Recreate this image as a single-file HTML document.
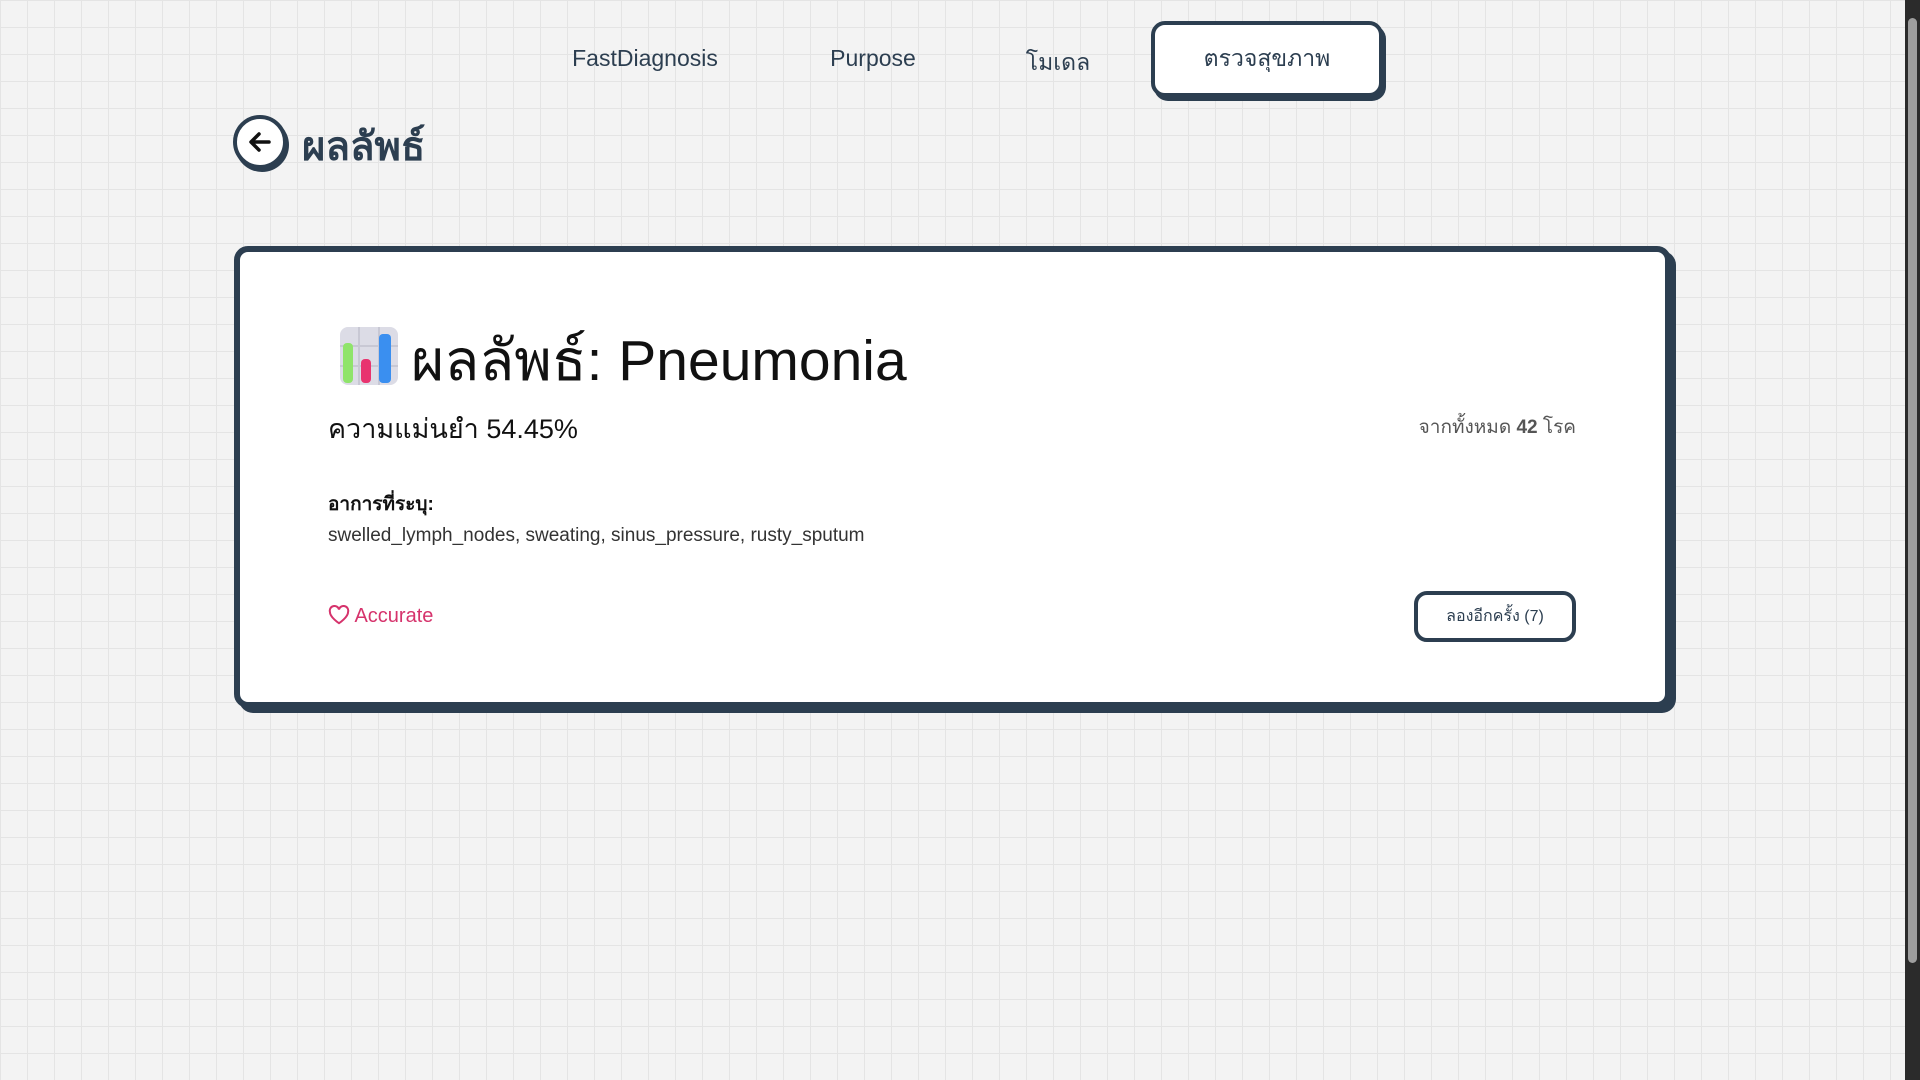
<!DOCTYPE html>
<html><head><meta charset="utf-8"><style>
*{box-sizing:border-box;margin:0;padding:0}
html,body{width:1920px;height:1080px;overflow:hidden}
body{font-family:"Liberation Sans",sans-serif;color:#1f2d3a;background-color:#f3f3f3;
background-image:linear-gradient(#e4e4e4 1px,transparent 1px),linear-gradient(90deg,#e4e4e4 1px,transparent 1px);background-size:27px 27px;position:relative}
.nav{position:absolute;top:0;left:0;width:1905px;height:100px}
.nav span{position:absolute;top:45px;font-size:23px;color:#2c3e50;transform:translateX(-50%)}
.active{position:absolute;left:1151px;top:21px;width:232px;height:76px;background:#fff;border:4px solid #2c3e50;border-radius:14px;box-shadow:3px 4px 0 #2c3e50;font-size:23px;text-align:center;line-height:66px;color:#2c3e50}
.back{position:absolute;left:233px;top:115px;width:54px;height:54px;border-radius:50%;background:#fff;border:4px solid #2c3e50;box-shadow:2px 3px 0 #2c3e50}
.h1{position:absolute;left:302px;top:114px;font-size:40px;font-weight:bold;color:#2c3e50}
.card{position:absolute;left:234px;top:246px;width:1437px;height:462px;background:#fff;border:6px solid #2c3e50;border-radius:14px;box-shadow:5px 5px 0 #2c3e50}
.title{position:absolute;left:411px;top:316px;font-size:57px;color:#111;font-weight:500}
.acc{position:absolute;left:328px;top:407px;font-size:27px;color:#111}
.tot{position:absolute;right:344px;top:412px;font-size:19px;color:#555}
.lab{position:absolute;left:328px;top:489px;font-size:19px;font-weight:bold;color:#111}
.sym{position:absolute;left:328px;top:525px;font-size:19px;color:#333}
.accu{position:absolute;left:328px;top:605px;font-size:20px;color:#d6336c}
.btn{position:absolute;left:1414px;top:591px;width:162px;height:51px;border:4px solid #2c3e50;border-radius:13px;background:#fff;font-size:16px;text-align:center;line-height:43px;color:#2c3e50}
.sb{position:absolute;right:0;top:0;width:15px;height:1080px;background:#2b2b2b}
.thumb{position:absolute;left:3px;top:18px;width:9px;height:945px;border-radius:5px;background:#9e9e9e}
</style></head><body>
<div class="nav">
<span style="left:645px">FastDiagnosis</span>
<span style="left:873px">Purpose</span>
<span style="left:1058px">โมเดล</span>
</div>
<div class="active">ตรวจสุขภาพ</div>
<div class="back"><svg width="46" height="46" viewBox="0 0 46 46" style="position:absolute;left:0;top:0"><path d="M32 23H15M22 15l-8 8 8 8" fill="none" stroke="#111" stroke-width="3.5" stroke-linecap="round" stroke-linejoin="round"/></svg></div>
<div class="h1">ผลลัพธ์</div>
<div class="card"></div>
<svg style="position:absolute;left:339px;top:326px" width="60" height="60" viewBox="0 0 60 60"><rect x="1" y="1" width="58" height="58" rx="8" fill="#dcdce6"/><path d="M20 1V59M40 1V59M1 20H59M1 40H59" stroke="#c8c8d4" stroke-width="2"/><rect x="4" y="17" width="10" height="40" rx="4" fill="#8fe46a"/><rect x="22" y="33" width="10" height="24" rx="4" fill="#e8336f"/><rect x="40" y="8" width="12" height="49" rx="4" fill="#3a8ff0"/></svg>
<div class="title">ผลลัพธ์: Pneumonia</div>
<div class="acc">ความแม่นยำ 54.45%</div>
<div class="tot">จากทั้งหมด <b>42</b> โรค</div>
<div class="lab">อาการที่ระบุ:</div>
<div class="sym">swelled_lymph_nodes, sweating, sinus_pressure, rusty_sputum</div>
<div class="accu"><svg width="22" height="20" viewBox="0 0 24 22" style="vertical-align:-3px"><path d="M12 20S2 13.5 2 7.5A5 5 0 0 1 12 5a5 5 0 0 1 10 2.5C22 13.5 12 20 12 20z" fill="none" stroke="#d6336c" stroke-width="2.2"/></svg> Accurate</div>
<div class="btn">ลองอีกครั้ง (7)</div>
<div class="sb"><div class="thumb"></div></div>
</body></html>
